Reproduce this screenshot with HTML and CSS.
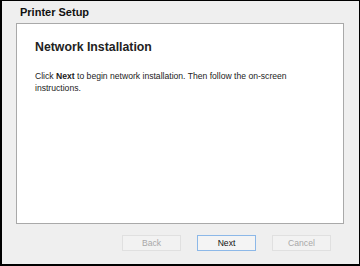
FILE: index.html
```html
<!DOCTYPE html>
<html>
<head>
<meta charset="utf-8">
<link rel="stylesheet" href="styles.css">
</head>
<body>
<div class="window">
  <div class="title">Printer Setup</div>
  <div class="panel">
    <h1 class="heading">Network Installation</h1>
    <p class="body-text">Click <b>Next</b> to begin network installation. Then follow the <span class="nowrap">on-screen</span> instructions.</p>
  </div>
  <div class="buttons">
    <button class="btn disabled">Back</button>
    <button class="btn primary">Next</button>
    <button class="btn disabled">Cancel</button>
  </div>
</div>
</body>
</html>
```
FILE: styles.css
```css
html, body {
  margin: 0;
  padding: 0;
}
body {
  width: 360px;
  height: 266px;
  background: #000;
  font-family: "Liberation Sans", Arial, sans-serif;
}
.window {
  box-sizing: border-box;
  width: 360px;
  height: 266px;
  border-style: solid;
  border-color: #000;
  border-width: 1px 1px 2px 2px;
  background: #efefef;
  display: flex;
  flex-direction: column;
}
.title {
  font-weight: bold;
  font-size: 11px;
  color: #111;
  padding: 5px 0 0 18px;
  box-sizing: border-box;
  height: 22px;
  line-height: 13px;
}
.panel {
  margin: 0 15px 0 14px;
  height: 201px;
  box-sizing: border-box;
  background: #fff;
  border: 1px solid #a9a9a9;
  padding: 15px 18px 0 18px;
}
.heading {
  margin: 0;
  font-size: 12.3px;
  font-weight: bold;
  color: #222;
  line-height: 16px;
}
.body-text {
  margin: 15px 0 0 0;
  font-size: 8.6px;
  line-height: 12px;
  color: #222;
}
.nowrap {
  white-space: nowrap;
}
.buttons {
  display: flex;
  justify-content: flex-end;
  gap: 16px;
  padding: 11px 28px 0 0;
}
.btn {
  width: 59px;
  height: 16px;
  box-sizing: border-box;
  padding: 0;
  font-family: "Liberation Sans", Arial, sans-serif;
  font-size: 8.6px;
  background: #f2f2f2;
  border: 1px solid #e0e0e0;
  color: #a8a8a8;
  border-radius: 0;
}
.btn.primary {
  background: #f4f4f4;
  border: 1px solid #8cb8e8;
  color: #111;
}
```
